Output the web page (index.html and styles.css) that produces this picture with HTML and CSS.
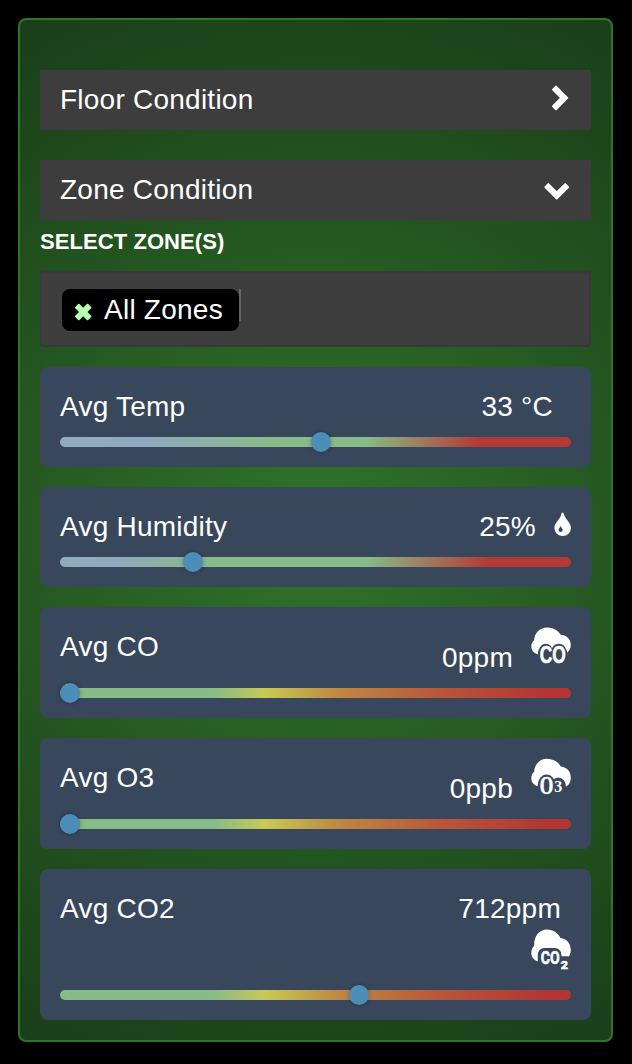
FILE: index.html
```html
<!DOCTYPE html>
<html lang="en">
<head>
<meta charset="utf-8">
<title>Zone Condition</title>
<link rel="stylesheet" href="styles.css">
</head>
<body>
<main class="panel">
  <div class="accordion">
    <span>Floor Condition</span>
    <svg class="chevron" viewBox="0 0 30 30"><path d="M15 1.6 26.3 12.9 15 24.3 12 21.3 20.2 12.9 12 4.6Z"/></svg>
  </div>
  <div class="accordion">
    <span>Zone Condition</span>
    <svg class="chevron" viewBox="0 0 30 30"><path d="M27.2 12.1 15.75 23.5 4.3 12.1 7.3 9.1 15.75 17.4 24.2 9.1Z"/></svg>
  </div>
  <div class="label">SELECT ZONE(S)</div>
  <div class="select">
    <span class="tag">
      <svg class="remove" viewBox="0 0 18 18"><path d="M4.8 1.8 9.2 6.2 13.6 1.8 16.4 4.6 12 9 16.4 13.4 13.6 16.2 9.2 11.8 4.8 16.2 2 13.4 6.4 9 2 4.6Z"/></svg>
      <span>All Zones</span>
    </span>
    <span class="caret"></span>
  </div>

  <section class="card">
    <div class="head"><span>Avg Temp</span><span class="value temp">33 °C</span></div>
    <div class="track track-temp"><i class="thumb" style="left:251px"></i></div>
  </section>

  <section class="card">
    <div class="head"><span>Avg Humidity</span>
      <span class="value humidity">25%
        <svg class="drop" viewBox="0 0 18 24"><path fill="#fff" d="M9.6 .6C10.6 .6 10.8 2.2 11.6 4C13.4 8 18 11.5 18 16A8.3 8 0 0 1 1.4 16C1.4 11.5 6 8 7.7 4C8.4 2.2 8.6 .6 9.6 .6Z"/><path fill="#38475c" d="M7.6 14C8 15.4 9.7 16.4 9.7 18A2.1 2.1 0 0 1 5.5 18C5.5 16.4 7.2 15.4 7.6 14Z"/></svg>
      </span>
    </div>
    <div class="track track-humidity"><i class="thumb" style="left:123px"></i></div>
  </section>

  <section class="card gas">
    <div class="head"><span>Avg CO</span>
      <span class="value">0ppm
        <svg class="cloud" viewBox="0 0 40 40">
          <path class="puff" d="M8 27.5C3.5 27 .3 23.5 .3 19.5C.3 16.5 1.6 14.5 3.2 13.3C3.2 5.5 9.5 .4 16 .4C22.5 .4 27.5 3.8 29.8 7.8C36 8.4 39.8 12.5 39.8 18C39.8 21 38.5 24 36.2 25.5L28 30Z"/>
          <g class="gas-halo"><ellipse cx="14.8" cy="28" rx="8" ry="11.3"/><ellipse cx="27.8" cy="28" rx="8.6" ry="11.3"/></g>
          <text class="gas-text bold" x="8.8" y="36.3" font-size="23.8" textLength="26" lengthAdjust="spacingAndGlyphs">CO</text>
        </svg>
      </span>
    </div>
    <div class="track track-gas"><i class="thumb" style="left:0px"></i></div>
  </section>

  <section class="card gas">
    <div class="head"><span>Avg O3</span>
      <span class="value">0ppb
        <svg class="cloud" viewBox="0 0 40 40">
          <path class="puff" d="M8.5 28.6C3.5 28 .3 24.5 .3 20.5C.3 17.3 1.6 15 3.2 13.8C3.2 6 9.5 .8 16 .8C22.5 .8 27.5 4.3 29.8 8.5C36 9.2 39.8 13.5 39.8 19.5C39.8 23.5 38.5 26.5 35.5 28.3L28 30Z"/>
          <g class="gas-halo"><ellipse cx="15.6" cy="28" rx="9" ry="11.6"/><ellipse cx="27.3" cy="28.6" rx="7.6" ry="9.2"/></g>
          <text class="gas-text serif bold" x="8.8" y="36.4" font-size="26" textLength="13.6" lengthAdjust="spacingAndGlyphs">O</text>
          <text class="gas-text serif" x="23.3" y="34.1" font-size="16">3</text>
        </svg>
      </span>
    </div>
    <div class="track track-gas"><i class="thumb" style="left:0px"></i></div>
  </section>

  <section class="card gas co2">
    <div class="head"><span>Avg CO2</span>
      <span class="value">
        <span class="reading">712ppm</span>
        <svg class="cloud" viewBox="0 0 40 40">
          <path class="puff" d="M7 32.6C3 31.3 .3 28 .3 24C.3 20.8 1.6 18.2 3.2 16.8C2.5 7 8.5 .4 16 .4C22.5 .4 27.3 4 29.5 9C35.6 9.6 39.8 14.5 39.8 21C39.8 23.5 39 26 37.5 28.3L28 30Z"/>
          <rect class="gas-halo" x="6.8" y="19" width="23.6" height="20" rx="6.5"/>
          <rect class="gas-halo" x="27.5" y="27.3" width="11.5" height="12.7" rx="2.5"/>
          <text class="gas-text narrow bold" x="9.8" y="34.8" font-size="17.6" textLength="18.8" lengthAdjust="spacingAndGlyphs">CO</text>
          <text class="gas-text narrow bold" x="29.8" y="39.6" font-size="11.8" textLength="7.2" lengthAdjust="spacingAndGlyphs">2</text>
        </svg>
      </span>
    </div>
    <div class="track track-gas"><i class="thumb" style="left:289px"></i></div>
  </section>
</main>
</body>
</html>
```

FILE: styles.css
```css
* { box-sizing: border-box; }
body {
  margin: 0;
  padding: 18px;
  background: #000;
  color: #fff;
  font: 28px/40px "Liberation Sans", Arial, sans-serif;
  letter-spacing: .24px;
}
.panel {
  width: 595px;
  height: 1024px;
  padding: 50px 20px 20px;
  border: 2px solid #2f7429;
  border-radius: 8px;
  background: radial-gradient(circle at center, #30732b 0%, #255821 50%, #1d471b 82%, #1b3e1b 100%);
}
.accordion {
  display: flex;
  align-items: center;
  justify-content: space-between;
  height: 60px;
  padding: 0 20px;
  background: #3d3d3d;
}
.accordion + .accordion { margin-top: 30px; }
.chevron {
  width: 30px;
  height: 30px;
  fill: #fff;
  stroke: #fff;
  stroke-width: 2;
  stroke-linejoin: round;
}
.label {
  height: 51px;
  font-size: 22px;
  font-weight: bold;
  line-height: 43px;
  letter-spacing: .07px;
}
.select {
  display: flex;
  height: 76px;
  margin-bottom: 20px;
  padding: 16px 20px;
  border: 2px solid #393939;
  border-radius: 4px;
  background: #3e3e3e;
}
.tag {
  display: flex;
  align-items: center;
  gap: 12px;
  width: 177px;
  height: 42px;
  padding-left: 12px;
  border-radius: 8px;
  background: #000;
}
.remove {
  width: 18px;
  height: 18px;
  margin-top: 3px;
  fill: #b9ffb3;
  stroke: #b9ffb3;
  stroke-width: 2;
  stroke-linejoin: round;
}
.caret { width: 2px; height: 32px; background: #666; }
.card {
  height: 100px;
  margin-bottom: 20px;
  padding: 20px;
  border-radius: 8px;
  background: #38475c;
}
.head {
  display: flex;
  justify-content: space-between;
  height: 40px;
}
.value { display: flex; }
.temp { padding-right: 18px; }
.drop { width: 18px; height: 24px; margin: 5px 0 0 17px; }
.gas { height: 110.8px; }
.gas .head { height: 50.8px; }
.gas .value { line-height: 62px; }
.cloud { width: 40px; height: 40px; margin-left: 18px; overflow: visible; }
.puff { fill: #fff; }
.gas-halo { fill: #38475c; }
.gas-text {
  fill: #fff;
  font-family: "Liberation Sans", Arial, sans-serif;
  font-weight: bold;
  letter-spacing: 0;
}
.bold { stroke: #fff; stroke-width: .6; }
.serif { font-family: "Liberation Serif", serif; }
.narrow { font-family: Roboto, sans-serif; }
.card.co2 { height: 151px; margin-bottom: 0; }
.co2 .head { height: 91px; }
.co2 .value { flex-direction: column; align-items: flex-end; line-height: 40px; }
.reading { padding-right: 10px; }
.track {
  position: relative;
  height: 10px;
  margin-top: 10px;
  border-radius: 5px;
}
.track-temp { background: linear-gradient(90deg, #90adbc 0, #90a8c0 15%, #87bb87 43%, #87bb87 60%, #b53936 82%); }
.track-humidity { background: linear-gradient(90deg, #90adbc 0, #90a8c0 10%, #87bb87 30%, #87bb87 60%, #b53936 84%); }
.track-gas { background: linear-gradient(90deg, #87bb87 0, #87bb87 30%, #c7c956 40%, #be8742 55%, #b8553a 75%, #b33633 95%); }
.thumb {
  position: absolute;
  top: -5px;
  width: 20px;
  height: 20px;
  border-radius: 50%;
  background: #4d8eb8;
  box-shadow: 0 0 4px rgba(0, 0, 0, .3);
}
```
